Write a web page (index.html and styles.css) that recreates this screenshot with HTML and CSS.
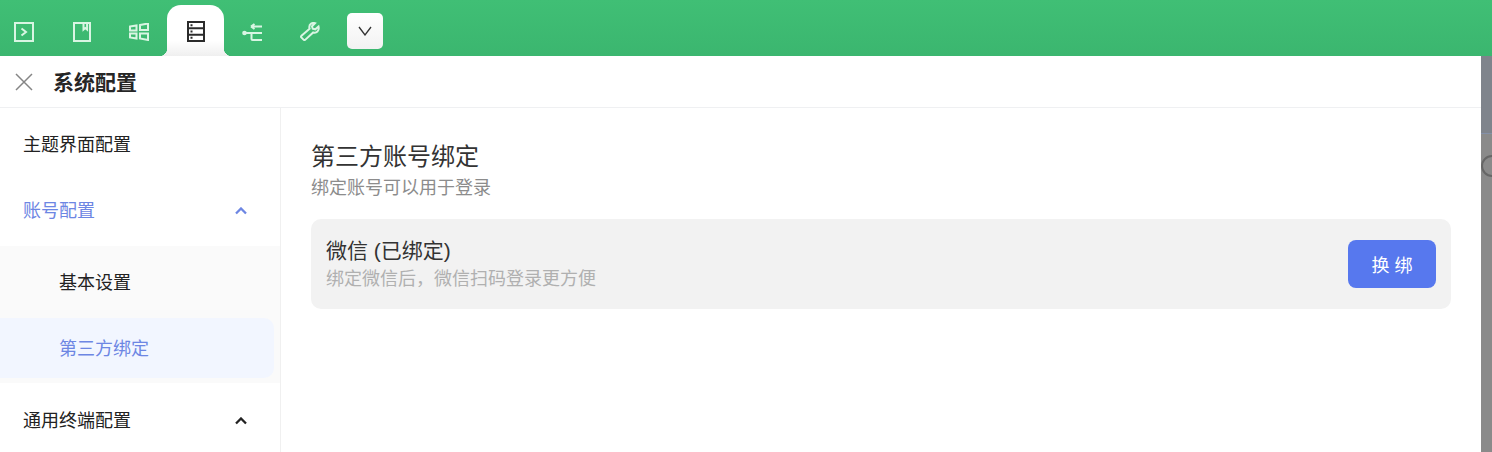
FILE: index.html
```html
<!DOCTYPE html>
<html lang="zh-CN">
<head>
    <meta charset="UTF-8">
    <title>系统配置</title>
    <link rel="stylesheet" href="styles.css">
</head>
<body>
    <div class="toolbar">
        <div class="tab">
            <svg width="20" height="20" viewBox="0 0 20 20"><rect x="1" y="1" width="18" height="18"/><path d="M7.500 6.500l4.500 3.500-4.500 3.500"/></svg>
        </div>
        <div class="tab">
            <svg width="18" height="20" viewBox="0 0 18 20"><path d="M1 1h16v18H1zM10.500 1v6.500l1.800-1.500 1.800 1.500V1"/></svg>
        </div>
        <div class="tab">
            <svg width="20" height="18" viewBox="0 0 20 18"><path d="M1 3.500l6.500-1v5H1zM11 2l8-1.500V7h-8zM1 10.500h6.500v5l-6.500-1zM11 10.500h8V17l-8-1.500z"/></svg>
        </div>
        <div class="tab tab-active">
            <svg width="18" height="21" viewBox="0 0 18 21"><rect x="1" y="1" width="16" height="19"/><path d="M1 7.300h16M1 13.700h16M3.500 4.200h2M3.500 10.500h2M3.500 16.800h2"/></svg>
        </div>
        <div class="tab">
            <svg width="21" height="18" viewBox="0 0 21 18"><circle cx="2.500" cy="10" r="2.300" class="dot"/><path d="M4 10h16M9.500 10v6c0 .6.400 1 1 1H20M9 3.500h11M9 3.500l3.500-2.500M9 3.500l3.500 2.500"/></svg>
        </div>
        <div class="tab">
            <svg width="20" height="19" viewBox="0 0 20 19"><path d="M18.500 4.500l-3.200 2.800-2.600-.6-.7-2.500L15 1.200c-2.800-.9-5.700.9-5.700 3.800 0 .7.100 1.200.3 1.700L1.500 13.700c-.6.600-.6 1.300 0 1.900l2 2c.6.600 1.300.6 1.900 0l7.800-7.100c3.200 1 6.400-1.500 5.300-6z"/></svg>
        </div>
        <button class="more">
            <svg width="14" height="10" viewBox="0 0 14 10"><path d="M1 1l6 8 6-8"/></svg>
        </button>
    </div>

    <div class="main">
        <div class="panel">
            <div class="panel-head">
                <svg class="close" width="18" height="18" viewBox="0 0 18 18"><path d="M1 1l16 16M17 1L1 17"/></svg>
                <span class="panel-title">系统配置</span>
            </div>
            <div class="panel-body">
                <div class="sidebar">
                    <div class="menu-item">主题界面配置</div>
                    <div class="menu-item menu-open">
                        账号配置
                        <svg class="arrow" width="12" height="8" viewBox="0 0 12 8"><path d="M1 6.500l5-5 5 5"/></svg>
                    </div>
                    <div class="submenu">
                        <div class="sub-item">基本设置</div>
                        <div class="sub-item sub-active">第三方绑定</div>
                    </div>
                    <div class="menu-item">
                        通用终端配置
                        <svg class="arrow" width="12" height="8" viewBox="0 0 12 8"><path d="M1 6.500l5-5 5 5"/></svg>
                    </div>
                </div>
                <div class="content">
                    <h2>第三方账号绑定</h2>
                    <p class="desc">绑定账号可以用于登录</p>
                    <div class="bind-card">
                        <div>
                            <div class="bind-name">微信 (已绑定)</div>
                            <div class="bind-tip">绑定微信后，微信扫码登录更方便</div>
                        </div>
                        <button class="bind-btn">换 绑</button>
                    </div>
                </div>
            </div>
        </div>
        <div class="backdrop">
            <div class="backdrop-top"></div>
            <div class="backdrop-ring"></div>
        </div>
    </div>
</body>
</html>
```

FILE: styles.css
```css
* {
    box-sizing: border-box;
}

html, body {
    margin: 0;
    height: 452px;
    overflow: hidden;
}

body {
    font-family: "Liberation Sans", "Noto Sans CJK SC", sans-serif;
    background: #fff;
    color: #222;
}

.toolbar {
    height: 56px;
    display: flex;
    align-items: flex-end;
    background: linear-gradient(#40bf75, #3bb66f);
}

.tab {
    width: 57px;
    height: 51px;
    display: flex;
    align-items: center;
    justify-content: center;
    padding-top: 2px;
}

.tab:first-child {
    width: 48px;
    margin-right: 5px;
}

.tab svg {
    fill: none;
    stroke: #d9f5e3;
    stroke-width: 2;
}

.tab .dot {
    fill: #d9f5e3;
    stroke: none;
}

.tab-active {
    position: relative;
    background: linear-gradient(#fff 70%, #efefef);
    border-radius: 14px 14px 0 0;
}

.tab-active svg {
    stroke: #2b2b2b;
}

.tab-active::before,
.tab-active::after {
    content: "";
    position: absolute;
    bottom: 0;
    width: 8px;
    height: 8px;
}

.tab-active::before {
    left: -8px;
    background: radial-gradient(circle at 0 0, transparent 8px, #efefef 8.500px);
}

.tab-active::after {
    right: -8px;
    background: radial-gradient(circle at 100% 0, transparent 8px, #efefef 8.500px);
}

.more {
    width: 36px;
    height: 36px;
    margin: 0 0 7px 9px;
    padding: 0;
    border: none;
    border-radius: 5px;
    background: linear-gradient(#fff, #f2f2f2);
    display: flex;
    align-items: center;
    justify-content: center;
}

.more svg {
    fill: none;
    stroke: #333;
    stroke-width: 1.300;
}

.main {
    display: flex;
    height: 396px;
}

.panel {
    width: 1481px;
    background: #fff;
    display: flex;
    flex-direction: column;
}

.panel-head {
    height: 52px;
    flex-shrink: 0;
    display: flex;
    align-items: center;
    padding-left: 15px;
    border-bottom: 1px solid #eff0f2;
}

.close {
    fill: none;
    stroke: #858585;
    stroke-width: 1.500;
}

.panel-title {
    margin: 0 0 2px 20px;
    font-size: 21px;
    font-weight: 700;
    color: #262626;
}

.panel-body {
    display: flex;
    flex: 1;
    min-height: 0;
    overflow: hidden;
}

.sidebar {
    width: 281px;
    padding-top: 3px;
    border-right: 1px solid #f0f0f0;
    font-size: 18px;
}

.menu-item {
    height: 66px;
    display: flex;
    align-items: center;
    justify-content: space-between;
    padding: 0 33px 2px 23px;
    color: #222;
}

.menu-item .arrow {
    margin-top: 4px;
    fill: none;
    stroke: #222;
    stroke-width: 2.300;
}

.menu-open {
    color: #6d86e3;
}

.menu-open .arrow {
    stroke: #6d86e3;
}

.submenu {
    height: 137px;
    margin: 3px 0 4px;
    padding-top: 3px;
    background: #fafafa;
}

.sub-item {
    height: 66px;
    padding: 0 0 2px 59px;
    display: flex;
    align-items: center;
}

.sub-active {
    width: 274px;
    height: 60px;
    margin-top: 3px;
    border-radius: 0 10px 10px 0;
    background: #f2f6ff;
    color: #6d86e3;
}

.content {
    flex: 1;
    padding: 32px 30px 0;
}

.content h2 {
    margin: 0;
    font-size: 24px;
    font-weight: 400;
    line-height: 34px;
    color: #333;
}

.desc {
    margin: 1px 0 0;
    font-size: 18px;
    line-height: 27px;
    color: #8c8c8c;
}

.bind-card {
    height: 90px;
    margin-top: 17px;
    padding: 0 15px;
    display: flex;
    align-items: center;
    justify-content: space-between;
    border-radius: 10px;
    background: #f2f2f2;
}

.bind-name {
    font-size: 21px;
    line-height: 28px;
    color: #333;
}

.bind-tip {
    margin-top: 1px;
    font-size: 18px;
    line-height: 26px;
    color: #b0b0b0;
}

.bind-btn {
    width: 88px;
    height: 48px;
    border: none;
    border-radius: 8px;
    background: #5778ee;
    color: #fff;
    font-family: inherit;
    font-size: 18px;
}

.backdrop {
    position: relative;
    flex: 1;
    overflow: hidden;
    background: #8a8a8a;
}

.backdrop-top {
    height: 78px;
    background: #7f848c;
    border-bottom: 1px solid #8490a8;
}

.backdrop-ring {
    position: absolute;
    top: 99px;
    left: 0;
    width: 22px;
    height: 22px;
    border: 2px solid #666;
    border-radius: 50%;
}
```
